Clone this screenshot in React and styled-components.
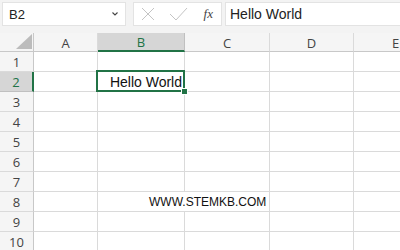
import React from 'react';
import styled, { createGlobalStyle } from 'styled-components';

const GREEN = '#217346';
const LINE = '#dadada';

const GlobalStyle = createGlobalStyle`
  html, body {
    margin: 0;
    padding: 0;
    background: #fff;
    font-family: "Liberation Sans", Arial, sans-serif;
    overflow: hidden;
  }
`;

const Sheet = styled.div`
  width: 400px;
  height: 250px;
  overflow: hidden;
`;

const FormulaBar = styled.div`
  display: flex;
  align-items: flex-start;
  height: 33px;
  box-sizing: border-box;
  padding: 2px 0 0 2px;
  background: #f3f3f3;
`;

const Box = styled.div`
  height: 24px;
  box-sizing: border-box;
  background: #fff;
  border: 1px solid #e3e3e3;
  display: flex;
  align-items: center;
`;

const NameBox = styled(Box)`
  width: 124px;
  justify-content: space-between;
  padding: 0 6px 0 6px;
  font-size: 13px;
  color: #222;
`;

const Buttons = styled(Box)`
  width: 89px;
  margin-left: 7px;
  padding-left: 7px;
  gap: 6px;
`;

const Fx = styled.span`
  margin-left: auto;
  margin-right: 8px;
  font-family: "Liberation Serif", "Times New Roman", serif;
  font-style: italic;
  font-size: 13px;
  color: #444;
`;

const Input = styled(Box)`
  flex: 1;
  margin-left: 3px;
  padding-left: 4px;
  font-size: 14px;
  color: #222;
  border-right: none;
`;

const Grid = styled.div`
  display: grid;
  width: max-content;
  grid-template-columns: 34px 64px 87px 85px 84px 84px;
  grid-template-rows: 19px repeat(10, 20px);
`;

const Corner = styled.div`
  background: #f5f5f5;
  border-right: 1px solid #c8c8c8;
  border-bottom: 1px solid #c8c8c8;
  box-sizing: border-box;
  display: flex;
  align-items: flex-end;
  justify-content: flex-end;
  padding: 0 1px 2px 0;
`;

const ColHeader = styled.div`
  box-sizing: border-box;
  background: ${p => (p.$active ? '#d6d6d6' : '#f5f5f5')};
  color: ${p => (p.$active ? GREEN : '#444')};
  border-right: 1px solid ${p => (p.$active ? '#c0c0c0' : LINE)};
  border-bottom: ${p => (p.$active ? `2px solid ${GREEN}` : '1px solid #c8c8c8')};
  font-family: "Open Sans", "Noto Sans", sans-serif;
  font-size: 13px;
  display: flex;
  align-items: center;
  justify-content: center;
  padding-top: 1px;
`;

const RowHeader = styled.div`
  box-sizing: border-box;
  background: ${p => (p.$active ? '#d6d6d6' : '#f5f5f5')};
  color: ${p => (p.$active ? GREEN : '#444')};
  border-right: ${p => (p.$active ? `2px solid ${GREEN}` : '1px solid #c8c8c8')};
  border-bottom: 1px solid ${p => (p.$active ? '#c0c0c0' : LINE)};
  font-family: "Open Sans", "Noto Sans", sans-serif;
  font-size: 13px;
  display: flex;
  align-items: center;
  justify-content: center;
`;

const Cell = styled.div`
  position: relative;
  box-sizing: border-box;
  border-right: ${p => (p.$overflow ? 'none' : `1px solid ${LINE}`)};
  border-bottom: 1px solid ${LINE};
  font-size: ${p => (p.$small ? '12px' : '14px')};
  color: #111;
  display: flex;
  align-items: center;
  justify-content: ${p => (p.$right ? 'flex-end' : 'flex-start')};
  padding: 0 2px 0 ${p => p.$indent || 2}px;
  white-space: nowrap;
  overflow: visible;
  z-index: ${p => (p.$selected ? 2 : 1)};

  ${p =>
    p.$selected &&
    `
    &::after {
      content: '';
      position: absolute;
      top: -2px;
      left: -2px;
      right: -1px;
      bottom: -1px;
      border: 2px solid ${GREEN};
    }
  `}
`;

const Handle = styled.span`
  position: absolute;
  right: -4px;
  bottom: -4px;
  width: 5px;
  height: 5px;
  background: ${GREEN};
  border: 1px solid #fff;
  z-index: 3;
`;

const cols = ['A', 'B', 'C', 'D', 'E'];

export default function App() {
  const rows = Array.from({ length: 10 }, (_, i) => i + 1);

  return (
    <Sheet>
      <GlobalStyle />
      <FormulaBar>
        <NameBox>
          <span>B2</span>
          <svg width="8" height="6" viewBox="0 0 8 6">
            <path d="M1.5 1.5 L4 4 L6.5 1.5" fill="none" stroke="#444" strokeWidth="1.1" />
          </svg>
        </NameBox>
        <Buttons>
          <svg width="14" height="14" viewBox="0 0 14 14">
            <path d="M1 1 L13 13 M13 1 L1 13" stroke="#c4c4c4" strokeWidth="1" fill="none" />
          </svg>
          <svg width="20" height="14" viewBox="0 0 20 14" style={{ marginLeft: 8 }}>
            <path d="M1 7 L7 13 L18 1" stroke="#c4c4c4" strokeWidth="1" fill="none" />
          </svg>
          <Fx>fx</Fx>
        </Buttons>
        <Input>Hello World</Input>
      </FormulaBar>

      <Grid>
        <Corner>
          <svg width="16" height="15" viewBox="0 0 16 15">
            <polygon points="16,0 16,15 0,15" fill="#bcbcbc" />
          </svg>
        </Corner>
        {cols.map(c => (
          <ColHeader key={c} $active={c === 'B'}>{c}</ColHeader>
        ))}
        {rows.map(r => (
          <React.Fragment key={r}>
            <RowHeader $active={r === 2}>{r}</RowHeader>
            {cols.map(c => {
              if (r === 2 && c === 'B') {
                return (
                  <Cell key={c} $selected $right>
                    Hello World
                    <Handle />
                  </Cell>
                );
              }
              if (r === 8 && c === 'B') {
                return (
                  <Cell key={c} $overflow $small $indent={51}>
                    WWW.STEMKB.COM
                  </Cell>
                );
              }
              return <Cell key={c} />;
            })}
          </React.Fragment>
        ))}
      </Grid>
    </Sheet>
  );
}
